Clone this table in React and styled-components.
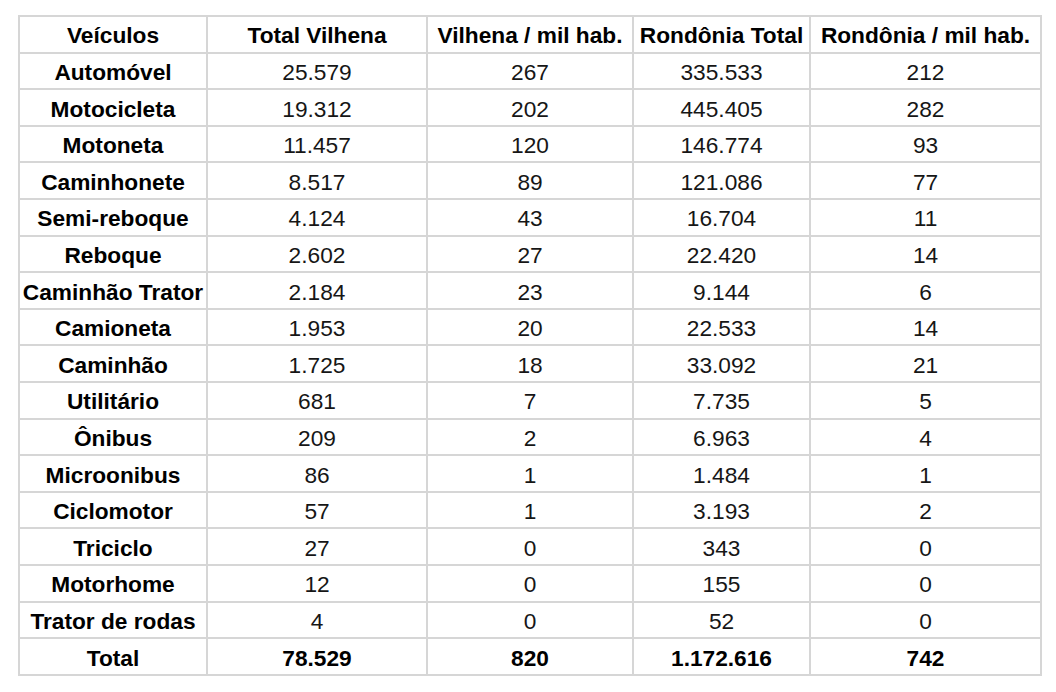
import React from "react";
import styled, { createGlobalStyle } from "styled-components";

const GlobalStyle = createGlobalStyle`
  html, body {
    margin: 0;
    padding: 0;
    background: #fff;
  }
  body {
    font-family: "Liberation Sans", Arial, sans-serif;
  }
`;

const Page = styled.div`
  padding: 15px 0 0 18px;
`;

const Table = styled.table`
  border-collapse: collapse;
  table-layout: fixed;
  width: 1022px;
  font-size: 22.7px;
  color: #111;
`;

const Cell = styled.td`
  border: 2px solid #d6d6d6;
  height: 31.6px;
  padding: 3px 0 0;
  text-align: center;
  vertical-align: middle;
  white-space: nowrap;
  line-height: 1;
  font-weight: ${(p) => (p.$bold ? 700 : 400)};
  color: ${(p) => (p.$bold ? "#000" : "#161616")};
`;

const HeadCell = styled(Cell).attrs({ as: "th" })``;

const columns = [188, 220, 206, 177, 231];

const headers = [
  "Veículos",
  "Total Vilhena",
  "Vilhena / mil hab.",
  "Rondônia Total",
  "Rondônia / mil hab.",
];

const rows = [
  ["Automóvel", "25.579", "267", "335.533", "212"],
  ["Motocicleta", "19.312", "202", "445.405", "282"],
  ["Motoneta", "11.457", "120", "146.774", "93"],
  ["Caminhonete", "8.517", "89", "121.086", "77"],
  ["Semi-reboque", "4.124", "43", "16.704", "11"],
  ["Reboque", "2.602", "27", "22.420", "14"],
  ["Caminhão Trator", "2.184", "23", "9.144", "6"],
  ["Camioneta", "1.953", "20", "22.533", "14"],
  ["Caminhão", "1.725", "18", "33.092", "21"],
  ["Utilitário", "681", "7", "7.735", "5"],
  ["Ônibus", "209", "2", "6.963", "4"],
  ["Microonibus", "86", "1", "1.484", "1"],
  ["Ciclomotor", "57", "1", "3.193", "2"],
  ["Triciclo", "27", "0", "343", "0"],
  ["Motorhome", "12", "0", "155", "0"],
  ["Trator de rodas", "4", "0", "52", "0"],
];

const total = ["Total", "78.529", "820", "1.172.616", "742"];

export default function App() {
  return (
    <>
      <GlobalStyle />
      <Page>
        <Table>
          <colgroup>
            {columns.map((w, i) => (
              <col key={i} style={{ width: w }} />
            ))}
          </colgroup>
          <thead>
            <tr>
              {headers.map((h) => (
                <HeadCell key={h} $bold>
                  {h}
                </HeadCell>
              ))}
            </tr>
          </thead>
          <tbody>
            {rows.map((row) => (
              <tr key={row[0]}>
                {row.map((value, i) => (
                  <Cell key={i} $bold={i === 0}>
                    {value}
                  </Cell>
                ))}
              </tr>
            ))}
            <tr>
              {total.map((value, i) => (
                <Cell key={i} $bold>
                  {value}
                </Cell>
              ))}
            </tr>
          </tbody>
        </Table>
      </Page>
    </>
  );
}
